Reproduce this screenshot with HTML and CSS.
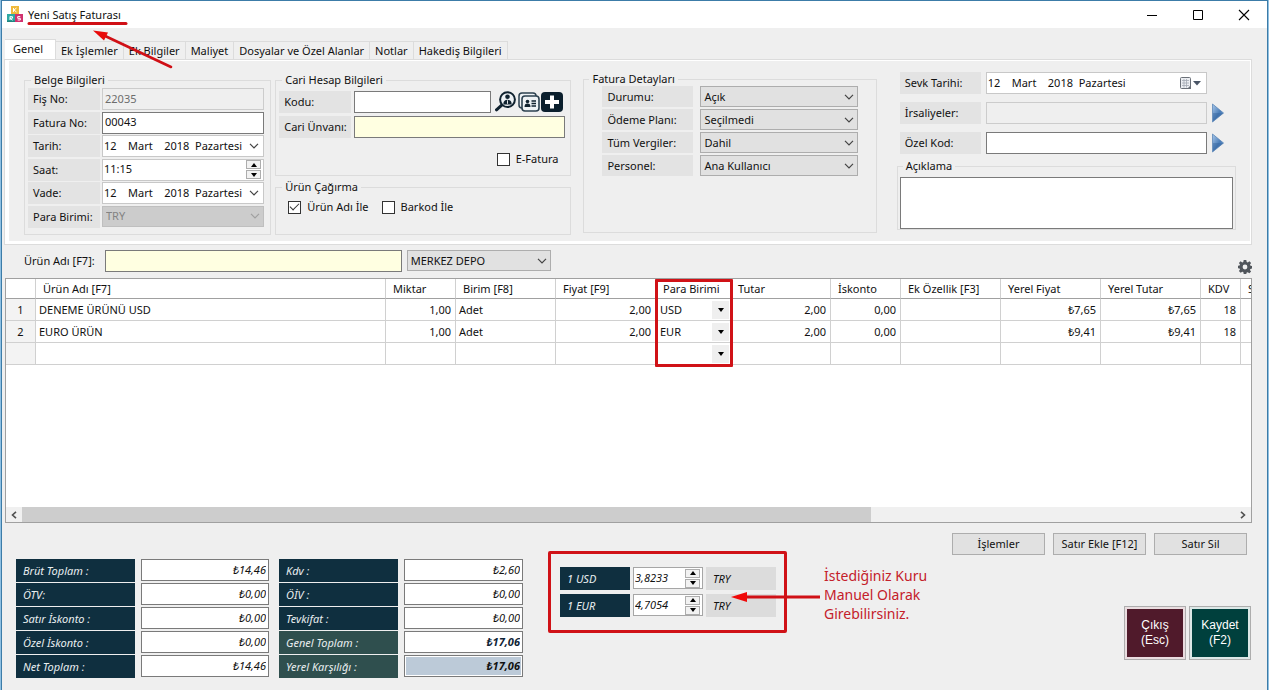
FILE: index.html
```html
<!DOCTYPE html>
<html lang="tr">
<head>
<meta charset="utf-8">
<title>Yeni Satış Faturası</title>
<link rel="stylesheet" href="styles.css">
</head>
<body>
<svg width="0" height="0" class="defs" aria-hidden="true">
  <defs>
    <symbol id="chev" viewBox="0 0 10 6"><path d="M1 .8 5 4.8 9 .8" fill="none" stroke="currentColor" stroke-width="1.2"/></symbol>
    <symbol id="up" viewBox="0 0 6 4"><path d="M0 4 3 0 6 4z"/></symbol>
    <symbol id="down" viewBox="0 0 6 4"><path d="M0 0h6L3 4z"/></symbol>
    <linearGradient id="blue" x1="0" y1="0" x2="1" y2="1"><stop offset="0" stop-color="#a9c8ea"/><stop offset=".55" stop-color="#4a7db8"/><stop offset="1" stop-color="#6c9dd2"/></linearGradient>
    <symbol id="play" viewBox="0 0 12 20"><path d="M.5 1v18L11.500 10z" fill="url(#blue)" stroke="#5c86b8" stroke-width=".8"/><path d="M1 10h10.500L1 18z" fill="#2f5f98" opacity=".4"/></symbol>
  </defs>
</svg>
<div class="window">
  <header class="titlebar">
    <svg class="logo" width="16" height="17" viewBox="0 0 16 17"><rect x="4" y="0" width="8" height="8" fill="#f0b93a"/><rect x="0" y="8" width="8" height="8" fill="#2fa9a4"/><rect x="8" y="8" width="8" height="8" fill="#d1326f"/><path d="M0 14.500h8v1.500H0z" fill="#1f8480"/><path d="M6.500 2v4M9.500 2 7 4l2.500 2M3 10.500v3.500M3 10.700h2.500v1.500H3l2.500 2M13.300 10.600h-2.600v1.700h2.600v1.700h-2.600" fill="none" stroke="#fff" stroke-width="1"/></svg>
    <h1>Yeni Satış Faturası</h1>
    <div class="winbtns">
      <button type="button" aria-label="Simge durumuna küçült"><svg width="12" height="12"><path d="M1 6.500h10" stroke="#000"/></svg></button>
      <button type="button" aria-label="Ekranı kapla"><svg width="12" height="12"><path d="M1.500 1.500h9v9h-9z" stroke="#000" fill="none"/></svg></button>
      <button type="button" aria-label="Kapat"><svg width="12" height="12"><path d="m1 1 10 10M11 1 1 11" stroke="#000" stroke-width="1.100"/></svg></button>
    </div>
  </header>

  <nav class="tabs" role="tablist">
    <button type="button" role="tab" class="active" aria-selected="true">Genel</button>
    <button type="button" role="tab">Ek İşlemler</button>
    <button type="button" role="tab">Ek Bilgiler</button>
    <button type="button" role="tab">Maliyet</button>
    <button type="button" role="tab">Dosyalar ve Özel Alanlar</button>
    <button type="button" role="tab">Notlar</button>
    <button type="button" role="tab">Hakediş Bilgileri</button>
  </nav>

  <main class="panel">
    <fieldset class="doc">
      <legend>Belge Bilgileri</legend>
      <div class="rows">
        <div class="row"><label for="fis">Fiş No:</label><input id="fis" class="box off" value="22035" disabled></div>
        <div class="row"><label for="fat">Fatura No:</label><input id="fat" class="box" value="00043"></div>
        <div class="row"><label for="tar">Tarih:</label><span class="box soft combo"><input id="tar" value="12    Mart    2018  Pazartesi"><button type="button" aria-label="Tarih seç"><svg width="10" height="6"><use href="#chev"/></svg></button></span></div>
        <div class="row"><label for="saat">Saat:</label><span class="box soft combo"><input id="saat" value="11:15"><span class="spin"><button type="button" aria-label="Artır"><svg width="6" height="4"><use href="#up"/></svg></button><button type="button" aria-label="Azalt"><svg width="6" height="4"><use href="#down"/></svg></button></span></span></div>
        <div class="row"><label for="vade">Vade:</label><span class="box soft combo"><input id="vade" value="12    Mart    2018  Pazartesi"><button type="button" aria-label="Vade seç"><svg width="10" height="6"><use href="#chev"/></svg></button></span></div>
        <div class="row"><label for="pb">Para Birimi:</label><span class="select off"><select id="pb" disabled><option>TRY</option></select><svg width="10" height="6"><use href="#chev"/></svg></span></div>
      </div>
    </fieldset>

    <div class="account">
      <fieldset class="cari">
        <legend>Cari Hesap Bilgileri</legend>
        <div class="row code"><label for="kodu">Kodu:</label><input id="kodu" class="box">
          <div class="icons">
            <button type="button" aria-label="Cari ara"><svg width="22" height="21" viewBox="0 0 22 21"><path d="M1.500 18.800 7 13.800" stroke="#10222f" stroke-width="3" stroke-linecap="round"/><circle cx="12.500" cy="8.600" r="7.400" fill="#eef2f5" stroke="#10222f" stroke-width="2"/><circle cx="12.500" cy="5.800" r="2.300" fill="#10222f"/><path d="M8.300 13.500c0-3.200 1.400-4.700 4.200-4.700s4.200 1.500 4.200 4.700z" fill="#10222f"/><path d="M12.500 9.300v3.500" stroke="#fff" stroke-width=".9"/></svg></button>
            <button type="button" aria-label="Cari kartı"><svg width="22" height="20" viewBox="0 0 22 20"><rect x="1" y="1" width="17" height="15" rx="3" fill="#eef2f5" stroke="#2c4150" stroke-width="1.500"/><rect x="4" y="4" width="17" height="15" rx="3" fill="#eef2f5" stroke="#2c4150" stroke-width="1.600"/><circle cx="9.500" cy="9.500" r="1.800" fill="#10222f"/><path d="M6.500 15c0-2.500 1-3.500 3-3.500s3 1 3 3.500z" fill="#10222f"/><path d="M13.500 9h4.500M13.500 11.500h4.500M13.500 14h4.500" stroke="#10222f" stroke-width="1.300"/></svg></button>
            <button type="button" aria-label="Yeni cari"><svg width="22" height="20" viewBox="0 0 22 20"><rect width="22" height="20" rx="4" fill="#0b1f2d"/><path d="M11 3.500v13M4 10h14" stroke="#fff" stroke-width="4"/></svg></button>
          </div>
        </div>
        <div class="row"><label for="unvan">Cari Ünvanı:</label><input id="unvan" class="box yellow"></div>
        <label class="check end"><input type="checkbox"> E-Fatura</label>
      </fieldset>
      <fieldset class="call">
        <legend>Ürün Çağırma</legend>
        <div class="checks"><label class="check"><input type="checkbox" checked> Ürün Adı İle</label><label class="check"><input type="checkbox"> Barkod İle</label></div>
      </fieldset>
    </div>

    <fieldset class="details">
      <legend>Fatura Detayları</legend>
      <div class="row"><label for="durum">Durumu:</label><span class="select"><select id="durum"><option>Açık</option></select><svg width="10" height="6"><use href="#chev"/></svg></span></div>
      <div class="row"><label for="odeme">Ödeme Planı:</label><span class="select"><select id="odeme"><option>Seçilmedi</option></select><svg width="10" height="6"><use href="#chev"/></svg></span></div>
      <div class="row"><label for="vergi">Tüm Vergiler:</label><span class="select"><select id="vergi"><option>Dahil</option></select><svg width="10" height="6"><use href="#chev"/></svg></span></div>
      <div class="row"><label for="pers">Personel:</label><span class="select"><select id="pers"><option>Ana Kullanıcı</option></select><svg width="10" height="6"><use href="#chev"/></svg></span></div>
    </fieldset>

    <div class="ship">
      <div class="row"><label for="sevk">Sevk Tarihi:</label><span class="box soft combo"><input id="sevk" value="12    Mart    2018  Pazartesi"><button type="button" aria-label="Sevk tarihi seç"><svg width="22" height="13" viewBox="0 0 22 13"><rect x=".5" y=".5" width="10" height="11" rx="1" fill="#eceef2" stroke="#6b7078"/><path d="M2 3.500h7M2 6h7M2 8.500h7M4 2v8.500M6.500 2v8.500" stroke="#a4aab4" stroke-width=".8"/><path d="M7 12l4-4v4z" fill="#6b7078"/><path d="M13 4h8l-4 4.500z" fill="#4a5566"/></svg></button></span></div>
      <div class="row"><label for="irs">İrsaliyeler:</label><input id="irs" class="box off" disabled><button type="button" class="go" aria-label="İrsaliye seç"><svg width="12" height="20"><use href="#play"/></svg></button></div>
      <div class="row"><label for="ozel">Özel Kod:</label><input id="ozel" class="box"><button type="button" class="go" aria-label="Özel kod seç"><svg width="12" height="20"><use href="#play"/></svg></button></div>
      <fieldset class="note"><legend>Açıklama</legend><textarea aria-label="Açıklama" class="box"></textarea></fieldset>
    </div>
  </main>

  <section class="search">
    <label for="urun">Ürün Adı [F7]:</label><input id="urun" class="box yellow">
    <span class="select"><select aria-label="Depo"><option>MERKEZ DEPO</option></select><svg width="10" height="6"><use href="#chev"/></svg></span>
    <button type="button" class="gear" aria-label="Ayarlar"><svg width="14" height="14" viewBox="0 0 14 14"><path fill="#50555b" fill-rule="evenodd" d="M5.700 0h2.600l.4 1.900 1.100.5L11.400 1.300l1.700 1.700-1.100 1.600.5 1.100 1.500.3v2.500l-1.600.4-.5 1.100 1.200 1.600-1.700 1.700-1.700-1.100-1 .4L8.300 14H5.700l-.4-1.900-1-.4-1.700 1.100L.9 11.100l1.100-1.600-.4-1.100L0 8.300V5.800l1.600-.3.4-1.100L.9 3l1.700-1.700 1.700 1.100 1-.5zM7 4.600a2.400 2.400 0 1 0 0 4.800 2.400 2.400 0 0 0 0-4.800z"/></svg></button>
  </section>

  <section class="grid">
    <div class="scroll">
      <table>
        <colgroup><col class="w30"><col class="w350"><col class="w70"><col class="w100"><col class="w100"><col class="w75"><col class="w100"><col class="w70"><col class="w100"><col class="w100"><col class="w100"><col class="w40"><col class="w100"></colgroup>
        <thead><tr><th></th><th>Ürün Adı [F7]</th><th>Miktar</th><th>Birim [F8]</th><th>Fiyat [F9]</th><th>Para Birimi</th><th>Tutar</th><th>İskonto</th><th>Ek Özellik [F3]</th><th>Yerel Fiyat</th><th>Yerel Tutar</th><th>KDV</th><th>S</th></tr></thead>
        <tbody>
          <tr><th>1</th><td>DENEME ÜRÜNÜ USD</td><td class="n">1,00</td><td>Adet</td><td class="n">2,00</td><td class="cur"><span><select aria-label="Para birimi 1"><option>USD</option></select><i><svg width="6" height="4"><use href="#down"/></svg></i></span></td><td class="n">2,00</td><td class="n">0,00</td><td></td><td class="n">₺7,65</td><td class="n">₺7,65</td><td class="n">18</td><td></td></tr>
          <tr><th>2</th><td>EURO ÜRÜN</td><td class="n">1,00</td><td>Adet</td><td class="n">2,00</td><td class="cur"><span><select aria-label="Para birimi 2"><option>EUR</option></select><i><svg width="6" height="4"><use href="#down"/></svg></i></span></td><td class="n">2,00</td><td class="n">0,00</td><td></td><td class="n">₺9,41</td><td class="n">₺9,41</td><td class="n">18</td><td></td></tr>
          <tr><th></th><td></td><td></td><td></td><td></td><td class="cur"><span><select aria-label="Para birimi 3"><option></option></select><i><svg width="6" height="4"><use href="#down"/></svg></i></span></td><td></td><td></td><td></td><td></td><td></td><td></td><td></td></tr>
        </tbody>
      </table>
      <div class="mark"></div>
    </div>
    <div class="bar">
      <button type="button" aria-label="Sola kaydır"><svg width="6" height="8"><path d="M5 .8 1.500 4 5 7.200" fill="none" stroke="#505050" stroke-width="1.600"/></svg></button>
      <div class="track"><div class="thumb"></div></div>
      <button type="button" aria-label="Sağa kaydır"><svg width="6" height="8"><path d="M1 .8 4.500 4 1 7.200" fill="none" stroke="#505050" stroke-width="1.600"/></svg></button>
    </div>
  </section>

  <footer>
    <div class="totals">
      <div><label for="t1">Brüt Toplam :</label><input id="t1" class="box" value="₺14,46"></div>
      <div><label for="t2">ÖTV:</label><input id="t2" class="box" value="₺0,00"></div>
      <div><label for="t3">Satır İskonto :</label><input id="t3" class="box" value="₺0,00"></div>
      <div><label for="t4">Özel İskonto :</label><input id="t4" class="box" value="₺0,00"></div>
      <div><label for="t5">Net Toplam :</label><input id="t5" class="box" value="₺14,46"></div>
    </div>
    <div class="totals second">
      <div><label for="t6">Kdv :</label><input id="t6" class="box" value="₺2,60"></div>
      <div><label for="t7">ÖİV :</label><input id="t7" class="box" value="₺0,00"></div>
      <div><label for="t8">Tevkifat :</label><input id="t8" class="box" value="₺0,00"></div>
      <div class="sum"><label for="t9">Genel Toplam :</label><input id="t9" class="box" value="₺17,06"></div>
      <div class="sum local"><label for="t10">Yerel Karşılığı :</label><input id="t10" class="box" value="₺17,06"></div>
    </div>
    <div class="rates">
      <div><label for="usd">1 USD</label><span class="box soft combo"><input id="usd" value="3,8233"><span class="spin"><button type="button" aria-label="Artır"><svg width="6" height="4"><use href="#up"/></svg></button><button type="button" aria-label="Azalt"><svg width="6" height="4"><use href="#down"/></svg></button></span></span><span class="unit">TRY</span></div>
      <div><label for="eur">1 EUR</label><span class="box soft combo"><input id="eur" value="4,7054"><span class="spin"><button type="button" aria-label="Artır"><svg width="6" height="4"><use href="#up"/></svg></button><button type="button" aria-label="Azalt"><svg width="6" height="4"><use href="#down"/></svg></button></span></span><span class="unit">TRY</span></div>
      <svg class="pointer" width="92" height="12" viewBox="0 0 92 12"><path d="M12 6h77" stroke="#d01016" stroke-width="3"/><path d="M0 6 16 1v10z" fill="#f00a0a"/></svg>
    </div>
    <p class="hint">İstediğiniz Kuru<br>Manuel Olarak<br>Girebilirsiniz.</p>
    <div class="actions">
      <div class="small"><button type="button">İşlemler</button><button type="button">Satır Ekle [F12]</button><button type="button">Satır Sil</button></div>
      <div class="big"><button type="button" class="exit">Çıkış<br>(Esc)</button><button type="button" class="save">Kaydet<br>(F2)</button></div>
    </div>
  </footer>

  <svg class="arrow" width="160" height="60" viewBox="0 0 160 60" aria-hidden="true"><path d="M8 4.500h97" stroke="#d01016" stroke-width="3" stroke-linecap="round"/><path d="M82 16l68 32" stroke="#d01016" stroke-width="2.600" stroke-linecap="round"/><path d="M72 11.500l15 2-4 8z" fill="#e80a0a"/></svg>
</div>
</body>
</html>
```
FILE: styles.css
```css
* { box-sizing: border-box; }
body {
  margin: 0;
  background: #8fc0e2;
  font: 11px/16px "Noto Sans", "Open Sans", sans-serif;
  color: #111;
}
button, input, select, textarea { font: inherit; color: inherit; margin: 0; padding: 0; border: 0; border-radius: 0; background: none; min-width: 0; }
svg { display: block; }
.defs { position: absolute; }
.window {
  position: relative;
  min-height: 100vh;
  margin: 0 1px;
  border: solid #3c7ca8;
  border-width: 1px 1px 0;
  background: #efefef;
  overflow: hidden;
}

.titlebar { display: flex; align-items: center; height: 27px; padding-left: 5px; background: #fff; }
.titlebar h1 { margin: 0 0 0 5px; font-size: 11px; font-weight: 400; }
.winbtns { display: flex; margin-left: auto; }
.winbtns button { display: grid; place-items: center; width: 46px; height: 27px; }

.tabs { display: flex; align-items: flex-end; margin: 11px 0 0 3px; height: 21px; }
.tabs button { height: 19px; padding: 0 5px; border: 1px solid #dcdcdc; border-width: 1px 1px 0 0; white-space: nowrap; }
.tabs .active { height: 21px; width: 51px; padding: 0 8px 2px; background: #fff; text-align: left; }

.panel {
  display: grid;
  grid-template-columns: 247fr 296fr 301fr 355fr;
  column-gap: 4px;
  margin: 0 16px 0 3px;
  padding: 11px 14px 6px 15px;
  border: solid #fff;
  border-width: 1px 1px 3px 4px;
  outline: 1px solid #dcdcdc;
}
fieldset { min-width: 0; margin: 0; padding: 1px 6px 6px 3px; border: 1px solid #dcdcdc; }
legend { margin-left: 3px; padding: 0 3px; line-height: 16px; }
.row { display: grid; grid-template-columns: 72px minmax(0, 1fr); column-gap: 2px; height: 21px; }
.row label { padding: 0 0 0 5px; background: #e3e3e3; line-height: 21px; white-space: nowrap; overflow: hidden; }
.doc { padding-top: 0; }
.rows { display: grid; height: 140px; align-content: space-between; grid-auto-rows: 22px; }
.rows .row { height: 22px; }
.box { width: 100%; height: 22px; padding: 0 3px 2px 2px; border: 1px solid #7a7a7a; background: #fff; }
.soft { border-color: #c8c8c8; }
.off.box { border-color: #ccc; background: #efefef; color: #6d6d6d; }
.box.yellow { background: #ffffe1; }
.combo { display: flex; align-items: center; padding: 0; }
.combo input { flex: 1; padding: 0 0 1px 1px; }
.combo > button { padding-right: 4px; color: #444; }
.spin { display: grid; gap: 1px; width: 15px; margin-right: 2px; }
.spin button { display: grid; place-items: center; height: 9px; border: 1px solid #adadad; background: #f2f2f2; }
.select { display: grid; align-items: center; height: 21px; border: 1px solid #adadad; background: #e1e1e1; color: #444; }
.select > * { grid-area: 1 / 1; }
.select select { width: 100%; height: 19px; padding: 0 14px 0 3px; appearance: none; color: #111; }
.select svg { justify-self: end; margin-right: 3px; pointer-events: none; }
.select.off { border-color: #bfbfbf; background: #ccc; color: #a0a0a0; }
.select.off select { color: #838383; opacity: 1; }

.account { display: grid; gap: 3px; grid-template-rows: auto 1fr; }
.cari { padding-right: 5px; }
.cari .row { margin: 2px 0 4px; grid-template-columns: 72px minmax(0, 1fr); column-gap: 3px; }
.cari .row.code { grid-template-columns: 72px minmax(0, 1fr) 71px; }
.icons { display: flex; gap: 1px; margin-top: -1px; padding-left: 1px; }
.check { display: flex; align-items: center; gap: 6px; }
.check input { appearance: none; display: grid; place-items: center; width: 13px; height: 13px; border: 1px solid #333; background: #fff; }
.check input:checked::after { content: ""; width: 8px; height: 4px; margin-bottom: 3px; border: solid #333; border-width: 0 0 1px 1px; transform: rotate(-45deg); }
.check.end { justify-content: flex-end; padding: 10px 7px 2px 0; }
.call { padding: 4px 6px 0 12px; }
.call legend { margin-left: -6px; }
.checks { display: flex; gap: 13px; }

.details { margin: 0 0 2px 8px; padding: 0 18px; }
.details legend { margin-left: -13px; line-height: 14px; }
.details .row { grid-template-columns: 91px minmax(0, 1fr); column-gap: 7px; margin-bottom: 2px; }

.ship { margin-left: 16px; }
.ship > .row { grid-template-columns: 81px minmax(0, 1fr) 12px; column-gap: 5px; padding-left: 3px; margin: 0 12px 9px 0; }
.ship .note { margin-top: -4px; padding: 3px 2px 0; }
.note textarea { display: block; height: 52px; resize: none; }
.note legend { margin-left: 3px; }

.search { display: flex; align-items: center; height: 33px; padding: 0 15px 0 22px; }
.search .box { width: 25%; max-width: 297px; margin: 0 5px 0 10px; }
.search .select { width: 144px; }
.gear { margin: 12px 0 0 auto; }

.grid { margin: 1px 15px 0 3px; border: 1px solid #a0a0a0; background: #fff; }
.scroll { position: relative; height: 228px; overflow: hidden; }
table { width: 1235px; table-layout: fixed; border-collapse: separate; border-spacing: 0; }
th, td { height: 22px; padding: 0 4px 0 3px; border: solid #d0d0d0; border-width: 0 1px 1px 0; font-weight: 400; text-align: left; white-space: nowrap; overflow: hidden; }
thead th { height: 20px; padding: 0 0 0 7px; border-bottom-color: #a0a0a0; }
tbody th { padding: 0; background: #f3f3f3; text-align: center; }
.n { text-align: right; }
.w30 { width: 30px; } .w40 { width: 40px; } .w70 { width: 70px; } .w75 { width: 75px; } .w100 { width: 100px; } .w350 { width: 350px; }
.cur { padding: 0 1px 0 4px; }
.cur span { display: flex; }
.cur select { flex: 1; appearance: none; }
.cur i { display: grid; place-items: center; width: 17px; height: 18px; background: #efefef; }
.mark { position: absolute; left: 649px; top: 0; width: 78px; height: 88px; border: 3px solid #d01217; border-radius: 1px; }
.bar { display: flex; height: 15px; background: #f0f0f0; }
.bar button { display: grid; place-items: center; width: 16px; }
.track { flex: 1; }
.thumb { width: 70%; height: 100%; background: #cdcdcd; }

footer { display: flex; align-items: flex-start; padding: 10px 16px 0 14px; }
.totals, .rates { font-style: italic; }
.totals { display: grid; gap: 1px; margin: 26px 10px 0 0; width: 253px; }
.totals > div { display: grid; grid-template-columns: 119px minmax(0, 1fr); column-gap: 6px; }
.totals label, .rates label { height: 23px; padding-left: 7px; line-height: 23px; background: #0f2f3f; color: #e9eef0; white-space: nowrap; }
.totals .box { text-align: right; padding-right: 2px; }
.second { width: 244px; margin-right: 25px; }
.second .sum label { background: #2f4f4e; }
.sum .box { font-weight: 700; color: #0f2436; }
.local .box { background: #bccad8; box-shadow: inset 0 0 0 1px #fff; color: #111; }
.rates { position: relative; display: grid; gap: 4px; margin-top: 18px; width: 239px; padding: 13px 8px 13px 9px; border: 3px solid #d01217; border-radius: 2px; }
.rates > div { display: grid; grid-template-columns: 70px 70px minmax(0, 1fr); column-gap: 3px; }
.rates .unit { padding-left: 7px; line-height: 23px; background: #dcdcdc; }
.rates .box { border-color: #a6a6a6; }
.pointer { position: absolute; left: 180px; top: 37px; }
.hint { margin: 33px 0 0 37px; font-size: 14px; line-height: 19px; color: #c4202a; white-space: nowrap; }
.actions { margin-left: auto; display: grid; justify-items: end; gap: 51px; }
.small { display: flex; gap: 8px; margin-right: 4px; }
.small button { width: 93px; height: 22px; border: 1px solid #adadad; background: #e1e1e1; white-space: nowrap; }
.big { display: flex; gap: 3px; }
.big button { width: 62px; height: 54px; border: 1px solid #adadad; font: 12px/15px "Liberation Sans", Arial, sans-serif; color: #fff; }
.big .exit { background: #501a2b; box-shadow: inset 0 0 0 2px #eadde0; }
.big .save { background: #00403d; box-shadow: inset 0 0 0 2px #dce8e7; }
.arrow { position: absolute; left: 19px; top: 18px; pointer-events: none; }
```
